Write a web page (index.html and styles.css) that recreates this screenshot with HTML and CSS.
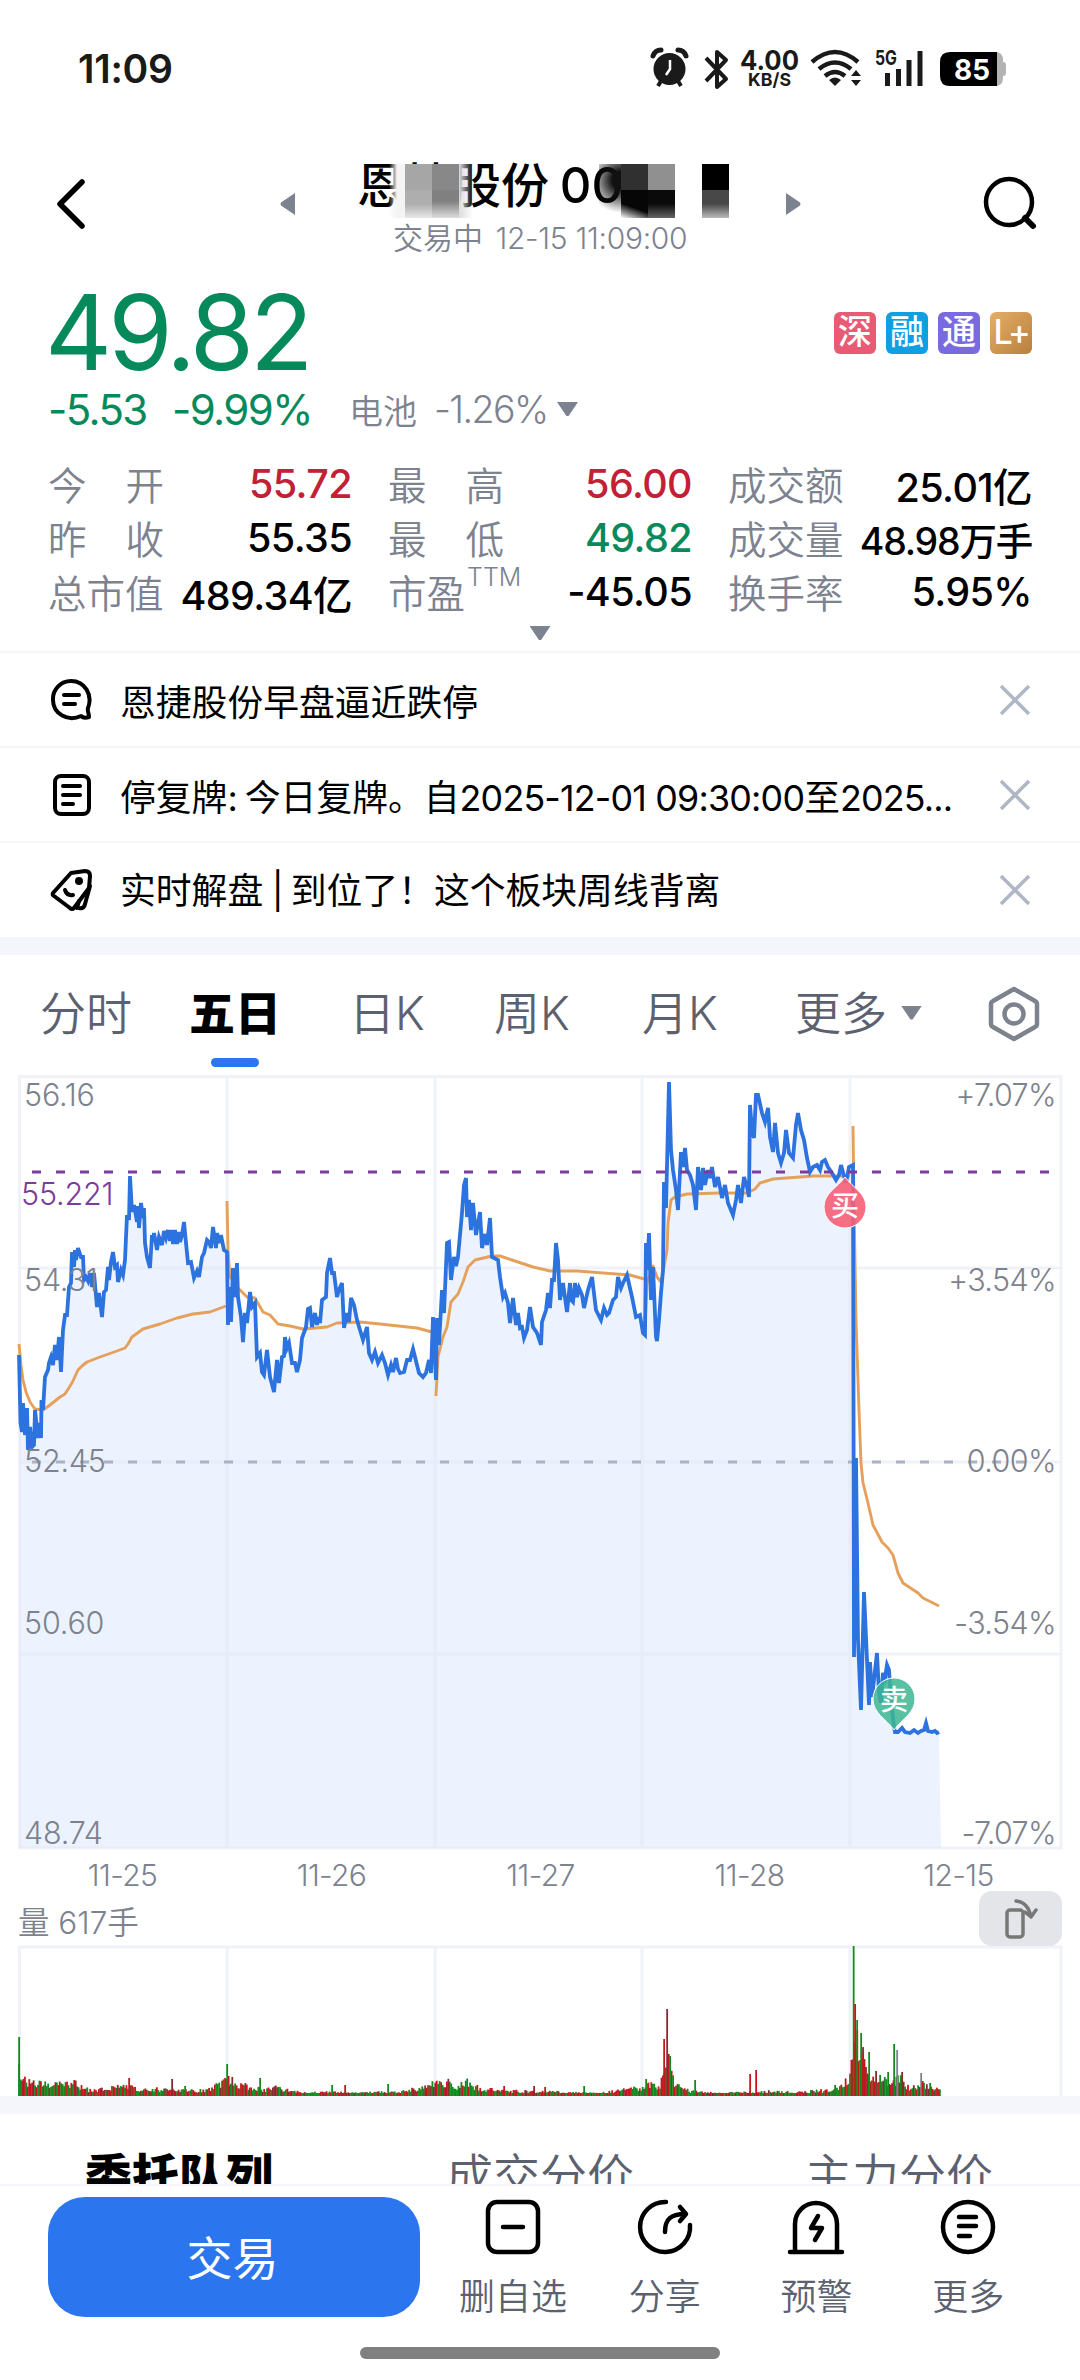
FILE: index.html
```
<!DOCTYPE html>
<html lang="zh-CN">
<head>
  <meta charset="UTF-8">
  <title>恩捷股份</title>
  <link rel="stylesheet" href="styles.css">
</head>
<body>
  <div class="status-bar">
    <span class="clock">11:09</span>
    <svg class="status-icons" width="370" height="50" viewBox="645 45 370 50">
      <!-- alarm -->
      <circle cx="669.500" cy="70" r="16" fill="#1a1a1a"/>
      <path d="M653 57q2-6 8-6M686 57q-2-6-8-6" stroke="#1a1a1a" stroke-width="5" fill="none" stroke-linecap="round"/>
      <path d="M661 82l-3 5M678 82l3 5" stroke="#1a1a1a" stroke-width="4"/>
      <path d="M670 61v9l-4 6" stroke="#fff" stroke-width="2.500" fill="none"/>
      <!-- bluetooth -->
      <path d="M706 59l20 21-9 8v-35l9 8-20 21" stroke="#1a1a1a" stroke-width="4" fill="none" stroke-linejoin="round"/>
      <text class="net-speed" x="740" y="71" textLength="59" lengthAdjust="spacingAndGlyphs">4.00</text>
      <text class="net-unit" x="748" y="87" textLength="43" lengthAdjust="spacingAndGlyphs">KB/S</text>
      <!-- wifi -->
      <g stroke="#1a1a1a" stroke-width="4.500" fill="none">
        <path d="M812 63q23-20 46 0"/>
        <path d="M819 70q16-13 32 0"/>
        <path d="M825 77q10-8 20 0"/>
      </g>
      <path d="M829 81q6-5 12 0l-6 6z" fill="#1a1a1a"/>
      <path d="M851 77l5-6 5 6zM851 81h10l-5 6z" fill="#1a1a1a"/>
      <text class="net-type" x="875" y="66" textLength="22" lengthAdjust="spacingAndGlyphs">5G</text>
      <path d="M887.500 74v13M898.500 70v17M909 61v26M920 52v35" stroke="#1a1a1a" stroke-width="5"/>
      <!-- battery -->
      <path d="M995 53q8 0 8 8v2q3 0 3 3v8q0 3-3 3v2q0 8-8 8z" fill="#b3b3b3"/>
      <path d="M950 53h47v34h-47q-10 0-10-10v-14q0-10 10-10z" fill="#000"/>
      <text class="battery" x="954" y="81" textLength="36" lengthAdjust="spacingAndGlyphs">85</text>
    </svg>
  </div>

  <div class="header">
    <svg class="back" width="30" height="54" viewBox="0 0 30 54"><path d="M26 5L4 27l22 22" fill="none" stroke="#000" stroke-width="5.500" stroke-linecap="round" stroke-linejoin="round"/></svg>
    <svg class="arrow" width="15" height="22" viewBox="0 0 15 22"><path d="M15 0v22L1 12.500q-1-1.500 0-3z" fill="#7d828f"/></svg>
    <div class="title">
      <div class="name">恩捷股份 <span>00</span></div>
      <div class="time">交易中 <span>12-15 11:09:00</span></div>
      <div class="mask mask-name"><i></i><i></i><i></i><i></i></div>
      <div class="mask mask-code"><i></i><i></i><i></i><i></i></div>
      <div class="mask mask-end"><i></i><i></i></div>
    </div>
    <svg class="arrow" width="15" height="22" viewBox="0 0 15 22"><path d="M0 0v22l14-9.500q1-1.500 0-3z" fill="#7d828f"/></svg>
    <svg class="search" width="56" height="56" viewBox="0 0 56 56"><circle cx="26" cy="26" r="23" fill="none" stroke="#000" stroke-width="4.500"/><path d="M42 42l8 8" stroke="#000" stroke-width="6" stroke-linecap="round"/></svg>
  </div>

  <div class="quote">
    <div class="price-row">
      <div class="price">49.82</div>
      <div class="badges">
        <span class="badge red">深</span>
        <span class="badge blue">融</span>
        <span class="badge purple">通</span>
        <span class="badge gold">L+</span>
      </div>
    </div>
    <div class="change-row">
      <span class="change">-5.53</span>
      <span class="percent">-9.99%</span>
      <span class="sector">电池</span>
      <span class="sector-percent">-1.26%</span>
      <i class="triangle"></i>
    </div>
    <div class="stats">
      <div class="stat"><label><b>今</b><b>开</b></label><span class="up">55.72</span></div>
      <div class="stat"><label><b>最</b><b>高</b></label><span class="up">56.00</span></div>
      <div class="stat"><label>成交额</label><span>25.01亿</span></div>
      <div class="stat"><label><b>昨</b><b>收</b></label><span>55.35</span></div>
      <div class="stat"><label><b>最</b><b>低</b></label><span class="down">49.82</span></div>
      <div class="stat"><label>成交量</label><span class="long">48.98万手</span></div>
      <div class="stat"><label>总市值</label><span>489.34亿</span></div>
      <div class="stat"><label class="ttm">市盈<sup>TTM</sup></label><span>-45.05</span></div>
      <div class="stat"><label>换手率</label><span>5.95%</span></div>
    </div>
    <div class="expand"><i class="triangle"></i></div>
  </div>

  <div class="news">
    <div class="news-item">
      <svg width="44" height="44" viewBox="0 0 44 44" fill="none" stroke="#000" stroke-width="4" stroke-linecap="round" stroke-linejoin="round"><path d="M39 39c-3 1-6 1-8-1-13 6-28-2-28-16A18 18 0 0 1 21 3c14 0 22 14 17 27-1 3 1 5 1 9z"/><path d="M14 17h15M14 26h11"/></svg>
      <p>恩捷股份早盘逼近跌停</p>
      <svg class="close" width="32" height="32" viewBox="0 0 32 32"><path d="M2 2l28 28M30 2L2 30"/></svg>
    </div>
    <div class="news-item">
      <svg width="44" height="44" viewBox="0 0 44 44" fill="none" stroke="#000" stroke-width="4" stroke-linecap="round"><rect x="5" y="3" width="34" height="38" rx="6"/><path d="M13 13h17M13 22h17M13 31h10"/></svg>
      <p>停复牌<em>: </em>今日复牌。自<span>2025-12-01 09:30:00</span>至<span>2025...</span></p>
      <svg class="close" width="32" height="32" viewBox="0 0 32 32"><path d="M2 2l28 28M30 2L2 30"/></svg>
    </div>
    <div class="news-item">
      <svg width="44" height="44" viewBox="0 0 44 44" fill="none" stroke="#000" stroke-width="4" stroke-linecap="round" stroke-linejoin="round"><path d="M3 25L21 5l14-2q5 0 5 5l-1 12-15 20q-2 2-4 0L4 28q-2-1-1-3z"/><path d="M40 18l-5 18q-1 5-6 4M29 33l-2 7"/><circle cx="29" cy="13" r="2"/><path d="M15 22q2 6 8 5"/></svg>
      <p>实时解盘<em> | </em>到位了！这个板块周线背离</p>
      <svg class="close" width="32" height="32" viewBox="0 0 32 32"><path d="M2 2l28 28M30 2L2 30"/></svg>
    </div>
  </div>

  <div class="tabs">
    <span>分时</span>
    <span class="active">五日</span>
    <span>日K</span>
    <span>周K</span>
    <span>月K</span>
    <span class="more">更多<i class="triangle"></i></span>
    <svg width="52" height="56" viewBox="0 0 52 56" fill="none" stroke="#7d828f" stroke-width="4.500" stroke-linejoin="round"><path d="M26 3l21 12q2 1 2 3v20q0 2-2 3L26 53 5 41q-2-1-2-3V18q0-2 2-3z"/><circle cx="26" cy="28" r="9.500"/></svg>
  </div>

  <svg class="chart" width="1080" height="780" viewBox="0 1070 1080 780">
    <polygon id="area" class="area"/>
    <path class="grid" d="M19.500 1076.500H1061V1848H19.500zM227 1076v772M435 1076v772M642 1076v772M850 1076v772M19 1268h1042M19 1462h1042M19 1654h1042"/>
    <path class="zero-line" d="M32 1462H1032"/>
    <g id="average" class="average"></g>
    <polyline id="price" class="price-line"/>
    <path class="cost-line" d="M32 1172H1050"/>
    <g class="axis">
      <text x="24" y="1106">56.16</text>
      <text x="24" y="1291">54.31</text>
      <text x="24" y="1472">52.45</text>
      <text x="24" y="1634">50.60</text>
      <text x="24" y="1844">48.74</text>
      <text class="cost" x="21" y="1205">55.221</text>
    </g>
    <g class="axis right">
      <text x="1056" y="1106">+7.07%</text>
      <text x="1056" y="1291">+3.54%</text>
      <text x="1056" y="1472">0.00%</text>
      <text x="1056" y="1634">-3.54%</text>
      <text x="1056" y="1844">-7.07%</text>
    </g>
    <path class="buy" d="M845 1177C853 1188 866 1193 866 1207A21 21 0 0 1 824 1207C824 1193 837 1188 845 1177z"/>
    <text class="marker" x="845" y="1216">买</text>
    <path class="sell" d="M894 1730C886 1719 873 1713 873 1699A21 21 0 0 1 915 1699C915 1713 902 1719 894 1730z"/>
    <text class="marker" x="894" y="1710">卖</text>
  </svg>

  <div class="dates">
    <span>11-25</span><span>11-26</span><span>11-27</span><span>11-28</span><span>12-15</span>
  </div>

  <div class="volume-head">
    <span>量 617手</span>
    <div class="rotate">
      <svg width="36" height="42" viewBox="0 0 36 42" fill="none" stroke="#777" stroke-width="3.500" stroke-linecap="round" stroke-linejoin="round"><rect x="4" y="12" width="16" height="27" rx="3"/><path d="M13 3q12 1 15 16M22 14l6 5 5-7"/></svg>
    </div>
  </div>

  <svg class="volume" width="1080" height="151" viewBox="0 1945 1080 151">
    <path class="grid" d="M19.500 2096V1947H1061V2096M227 1947v149M435 1947v149M642 1947v149M850 1947v149"/>
    <g id="bars"></g>
  </svg>

  <div class="sub-tabs">
    <span class="active">委托队列</span>
    <span>成交分价</span>
    <span>主力分价</span>
  </div>

  <div class="bottom-bar">
    <button>交易</button>
    <div class="actions">
      <div class="action">
        <svg width="58" height="58" viewBox="0 0 58 58"><rect x="4" y="4" width="50" height="50" rx="9"/><path d="M19 29h20"/></svg>
        <span>删自选</span>
      </div>
      <div class="action">
        <svg width="58" height="58" viewBox="0 0 58 58"><path d="M30 4A25 25 0 1 0 54 27M29 34C29 21 35 16 49 16M44 9l6 7-6 7"/></svg>
        <span>分享</span>
      </div>
      <div class="action">
        <svg width="58" height="58" viewBox="0 0 58 58"><path d="M8 53V26a21 21 0 0 1 42 0V53M3 54h52M31 18l-7 12h11l-7 12"/></svg>
        <span>预警</span>
      </div>
      <div class="action">
        <svg width="58" height="58" viewBox="0 0 58 58"><circle cx="29" cy="29" r="25"/><path d="M20 19h17M20 28h17M20 38h11"/></svg>
        <span>更多</span>
      </div>
    </div>
  </div>
  <div class="home-bar"></div>

  <script src="chart.js"></script>
</body>
</html>
```
FILE: styles.css
```
* {
  box-sizing: border-box;
}

body {
  margin: 0;
  width: 1080px;
  height: 2380px;
  overflow: hidden;
  background-color: #fff;
  color: #000;
  font-family: Inter, "Noto Sans CJK SC", sans-serif;
}

svg {
  display: block;
  flex-shrink: 0;
}

i, b, em {
  font-style: normal;
  font-weight: inherit;
}

.status-bar {
  display: flex;
  justify-content: space-between;
  align-items: center;
  height: 138px;
  padding: 0 65px 0 78px;
}

.clock {
  margin-top: -2px;
  font-size: 39px;
  font-weight: 600;
  letter-spacing: -0.3px;
  color: #1a1a1a;
}

.net-speed {
  font: 700 27px Inter, sans-serif;
  fill: #1a1a1a;
}

.net-unit {
  font: 700 18px Inter, sans-serif;
  fill: #1a1a1a;
}

.net-type {
  font: 700 20px Inter, sans-serif;
  fill: #1a1a1a;
}

.battery {
  font: 700 29px Inter, sans-serif;
  fill: #fff;
}

/* header */
.header {
  display: flex;
  align-items: center;
  height: 132px;
  padding: 0 41px 0 56px;
}

.header .arrow {
  margin-left: 194px;
}

.title {
  position: relative;
  width: 387px;
  margin-left: 62px;
  height: 132px;
  padding-top: 16px;
}

.title + .arrow {
  margin-left: 42px;
}

.search {
  margin-left: auto;
}

.name {
  font-size: 48px;
  line-height: 64px;
  font-weight: 500;
  white-space: pre;
}

.name span {
  margin-left: -2px;
  font-weight: 450;
  font-size: 49px;
}

.time {
  margin: 3px 0 0 36px;
  font-size: 30px;
  line-height: 34px;
  color: #7d828f;
  font-weight: 350;
  white-space: nowrap;
}

.time span {
  margin-left: 4px;
  letter-spacing: -0.3px;
}

/* mosaic over the name and code */
.mask {
  position: absolute;
  top: 26px;
  display: grid;
  grid-template-columns: 27px 27px;
  grid-template-rows: 26px 28px;
}

.mask-name {
  left: 48px;
}

.mask-name::before {
  content: "";
  position: absolute;
  left: -16px;
  width: 16px;
  height: 54px;
  background: linear-gradient(90deg, rgba(244, 244, 244, 0), #f4f4f4 50%);
}

.mask-name::after {
  content: "";
  position: absolute;
  left: 54px;
  width: 14px;
  height: 54px;
  background: linear-gradient(90deg, #ddd, rgba(255, 255, 255, 0));
}

.mask-name i:nth-child(1) { background-color: #a6a6a6; }
.mask-name i:nth-child(2) { background-color: #888; }
.mask-name i:nth-child(3) { background: linear-gradient(#aeaeae 50%, #e8e8e8); }
.mask-name i:nth-child(4) { background: linear-gradient(#808080 40%, #ddd); }

.mask-code {
  left: 264px;
}

.mask-code::before {
  content: "";
  position: absolute;
  left: -22px;
  width: 22px;
  height: 54px;
  background: radial-gradient(circle at 100% 30%, #111 20%, rgba(60, 60, 60, 0) 75%);
}

.mask-code i:nth-child(1) { background-color: #303030; }
.mask-code i:nth-child(2) { background-color: #909090; }
.mask-code i:nth-child(3) { background: linear-gradient(200deg, #060606 60%, #fff); }
.mask-code i:nth-child(4) { background: linear-gradient(#0a0a0a 50%, #666); }

.mask-end {
  left: 345px;
  grid-template-columns: 27px;
}

.mask-end i:nth-child(1) { background-color: #000; }
.mask-end i:nth-child(2) { background: linear-gradient(#484848 50%, #bbb); }

/* quote */
.quote {
  height: 383px;
  padding: 0 48px;
  border-bottom: 2px solid #f4f5f8;
}

.price-row {
  display: flex;
  justify-content: space-between;
  align-items: center;
  height: 124px;
}

.price {
  margin-left: -3px;
  font-size: 104px;
  line-height: 124px;
  letter-spacing: -4px;
  color: #078a5b;
}

.badges {
  display: flex;
  gap: 10px;
  margin-top: 2px;
}

.badge {
  width: 42px;
  height: 42px;
  border-radius: 6px;
  font-size: 34px;
  font-weight: 500;
  line-height: 40px;
  text-align: center;
  color: #fff;
}

.red { background-color: #e95b74; }
.blue { background-color: #109fe2; }
.purple { background-color: #7a6adf; }

.gold {
  background: linear-gradient(135deg, #e5ae67, #b7813e);
  font-weight: 450;
  font-size: 34px;
  letter-spacing: -2px;
}

.change-row {
  display: flex;
  align-items: center;
  height: 32px;
  margin-top: -1px;
  font-size: 42px;
  letter-spacing: -1.6px;
  color: #7d828f;
}

.change {
  width: 124px;
  color: #078a5b;
}

.percent {
  width: 177px;
  color: #078a5b;
}

.sector {
  width: 85px;
  font-size: 34px;
  font-weight: 350;
  letter-spacing: 0;
}

.sector-percent {
  width: 123px;
  font-size: 37.5px;
  font-weight: 350;
}

.triangle {
  width: 21px;
  height: 14px;
  background-color: #7d828f;
  clip-path: polygon(0 0, 100% 0, 55% 100%, 45% 100%);
}

.stats {
  display: grid;
  grid-template-columns: 304px 304px 304px;
  grid-auto-rows: 54px;
  column-gap: 36px;
  margin-top: 32px;
}

.stat {
  display: flex;
  justify-content: space-between;
  align-items: center;
  white-space: nowrap;
}

.stat label {
  display: flex;
  justify-content: space-between;
  width: 116px;
  margin-top: -2px;
  font-size: 38.5px;
  font-weight: 350;
  color: #7d828f;
}

.stat .ttm {
  justify-content: flex-start;
}

.stat sup {
  margin: 2px 0 0 2px;
  font-size: 25px;
  line-height: 25px;
}

.stat span {
  font-size: 39.5px;
  font-weight: 450;
  letter-spacing: -0.6px;
}

.stat .long {
  font-size: 37.5px;
  letter-spacing: -1.2px;
}

.stat .up { color: #c32036; }
.stat .down { color: #078a5b; }

.expand {
  display: flex;
  justify-content: center;
  margin-top: 7px;
}

/* news */
.news-item {
  display: flex;
  align-items: center;
  height: 95px;
  padding: 0 49px 0 50px;
  border-bottom: 2px solid #f4f5f8;
}

.news-item p {
  flex: 1;
  margin: 0 0 0 26px;
  font-size: 35.8px;
  white-space: nowrap;
}

.news-item p span {
  letter-spacing: -0.8px;
}

.news-item em {
  letter-spacing: -1.5px;
}

.news-item:last-child {
  height: 94px;
  border-bottom: none;
}

.news-item:last-child p {
  margin-top: -4px;
}

.close path {
  stroke: #b0b7c4;
  stroke-width: 3.5;
}

/* period tabs */
.tabs {
  display: grid;
  grid-template-columns: 149px 160px 145px 148px 153px 193px 52px;
  align-items: center;
  height: 133px;
  padding: 0 0 0 40px;
  border-top: 18px solid #f4f6fb;
  font-size: 46px;
  font-weight: 350;
  line-height: 60px;
  color: #5c6170;
}

.tabs svg {
  margin-top: 3px;
}

.tabs .active {
  position: relative;
  font-weight: 900;
  color: #000;
}

.tabs .active::after {
  content: "";
  position: absolute;
  left: 22px;
  bottom: -24px;
  width: 48px;
  height: 9px;
  border-radius: 5px;
  background-color: #2b75ee;
}

.more {
  display: flex;
  align-items: center;
  gap: 14px;
}

/* charts */
.grid {
  fill: none;
  stroke: #e1e6f2;
  stroke-opacity: 0.5;
  stroke-width: 3;
}

.area {
  fill: #ecf3fe;
}

.price-line {
  fill: none;
  stroke: #2d73e0;
  stroke-width: 3.8;
}

.average {
  fill: none;
  stroke: #e5a15c;
  stroke-width: 2.9;
  stroke-linejoin: round;
}

.cost-line {
  stroke: #7b3c9c;
  stroke-width: 3;
  stroke-dasharray: 9 15;
}

.zero-line {
  stroke: #acb2c5;
  stroke-width: 3;
  stroke-dasharray: 9 15;
}

.axis {
  font-size: 30.5px;
  font-weight: 350;
  letter-spacing: -0.2px;
  fill: #7d828f;
}

.right {
  letter-spacing: -0.6px;
  text-anchor: end;
}

.cost {
  fill: #7b3c9c;
}

.buy {
  fill: #f75f77;
  fill-opacity: 0.9;
  stroke: #fff;
}

.sell {
  fill: #3cb690;
  fill-opacity: 0.85;
  stroke: #fff;
}

.marker {
  font-size: 28px;
  font-weight: 500;
  text-anchor: middle;
  fill: #fff;
}

.dates {
  display: grid;
  grid-template-columns: repeat(5, 209px);
  height: 41px;
  padding-left: 18px;
  font-size: 30px;
  line-height: 51px;
  font-weight: 350;
  letter-spacing: -0.6px;
  text-align: center;
  color: #7d828f;
}

.volume-head {
  display: flex;
  justify-content: space-between;
  height: 54px;
  padding: 0 18px;
  font-size: 31.5px;
  line-height: 64px;
  font-weight: 350;
  color: #7d828f;
}

.rotate {
  display: flex;
  justify-content: center;
  align-items: center;
  width: 83px;
  height: 55px;
  border-radius: 13px;
  background-color: #e4e5e9;
}

.green { fill: #15891e; }
.bar-red { fill: #c5161f; }
.dark { fill: #862a32; }
.gray { fill: #7d828f; }

/* bottom */
.sub-tabs {
  display: grid;
  grid-template-columns: 361px 359px auto;
  height: 88px;
  padding: 31px 0 0 85px;
  overflow: hidden;
  border-top: 18px solid #f4f6fb;
  font-size: 47px;
  font-weight: 350;
  line-height: 62px;
  color: #5c6170;
}

.sub-tabs .active {
  font-weight: 900;
  color: #000;
}

.bottom-bar {
  position: relative;
  display: flex;
  height: 163px;
  padding: 11px 0 0 48px;
  border-top: 2px solid #f4f5f8;
  background-color: #fff;
}

.bottom-bar button {
  width: 372px;
  height: 120px;
  padding: 0 3px 4px 0;
  border: none;
  border-radius: 37px;
  background-color: #2b75ee;
  color: #fff;
  font-family: inherit;
  font-size: 46px;
}

.actions {
  display: grid;
  grid-template-columns: repeat(4, 151.8px);
  margin: 1px 0 0 17px;
}

.action {
  display: flex;
  flex-direction: column;
  align-items: center;
  font-size: 36px;
  font-weight: 350;
  color: #5c6170;
}

.action svg {
  fill: none;
  stroke: #000;
  stroke-width: 4.5;
  stroke-linecap: round;
  stroke-linejoin: round;
}

.action span {
  margin-top: 16px;
  line-height: 50px;
}

.home-bar {
  width: 360px;
  height: 12px;
  margin: 0 auto;
  border-radius: 6px;
  background-color: #808080;
}
```
FILE: chart.js
```
const BOTTOM = 1848;

const price = `
19,1355 20.5,1423 22,1432 23,1403 25,1435 27,1408 28,1450 30,1427 32,1447 34,1445 35,1410 38,1438 39,1423 41,1438
41.5,1400 43,1410 45,1377 48,1370 49,1363 51,1357 53,1365 55,1345 57,1360 59,1337 61,1372 63,1330 65,1315 67,1315 69,1287
71,1283 72,1252 74,1267 75,1250 76,1260 78,1248 81,1257 83,1257 84,1280 86,1277 88,1281 90,1273 92,1287 94,1273 97,1307 99,1293
102,1317 104,1292 106,1290 108,1267 109,1280 111,1262 113,1252 115,1267 117,1265 118,1282 121,1270 123,1275 125,1260
127,1215 129,1220 130,1176 132,1212 134,1205 137,1222 138,1206 139,1228 141,1203 143,1218 144,1208 145,1243 147,1257
150,1268 152,1235 153,1242 154,1233 157,1250 159,1237 162,1245 164,1231 166,1238 168,1230 170,1241 172,1230 173,1244 175,1230 177,1244 179,1232 180,1242
182,1235 184,1222 186,1243 188,1263 191,1262 194,1278 197,1271 199,1277 202,1257 204,1253 207,1240 209,1242 211,1248 213,1227
216,1248 217,1233 219,1243 221,1235 224,1250 227,1252 228,1325 229,1287 231,1322 233,1268 235,1297 237,1263 238,1297
241,1317 243,1342 245,1313 247,1323 250,1292 252,1307 255,1303 257,1357 260,1353 262,1372 264,1375 267,1350 270,1377
274,1392 277,1360 279,1383 282,1357 284,1356 285,1337 287,1348 289,1343 292,1363 295,1363 297,1372 300,1360 302,1338
306,1327 308,1309 310,1308 312,1327 315,1313 317,1325 318,1317 320,1323 322,1300 326,1297 327,1273 330,1258 332,1273
334,1273 337,1297 339,1290 342,1283 344,1328 347,1313 349,1322 351,1298 354,1305 357,1320 360,1330 363,1340 367,1327
369,1353 372,1360 375,1352 378,1363 382,1355 385,1363 388,1375 391,1365 393,1372 396,1358 398,1369 400,1373 404,1372 407,1360 410,1360
413,1349 417,1365 419,1373 423,1377 426,1373 429,1360 431,1373 433,1317 436,1380 437,1318 439,1345 442,1290 444,1313
447,1243 449,1242 451,1280 454,1257 456,1266 458,1257 462,1213 464,1185 466,1178 467,1217 469,1200 471,1230 473,1203
476,1235 480,1212 482,1248 485,1234 487,1245 490,1218 492,1257 498,1260 500,1277 503,1297 505,1293 508,1303 510,1323 513,1298
516,1325 518,1313 520,1328 522,1327 524,1338 527,1330 530,1307 533,1327 537,1333 541,1345 542,1322 546,1310 548,1293 550,1308
552,1280 554,1280 556,1243 558,1260 560,1300 563,1283 567,1312 570,1283 571,1300 573,1302 575,1283 577,1297 579,1288 582,1295
584,1308 588,1290 592,1277 596,1310 601,1320 604,1308 607,1315 609,1313 613,1300 616,1297 618,1277 621,1288 623,1283
627,1275 632,1297 636,1317 640,1315 643,1333 645,1335 646,1243 647,1270 649,1233 651,1300 653,1267 656,1337 657,1341
659,1320 661,1293 663,1270 664,1182 666,1208 669,1082 671,1150 673,1170 676,1190 678,1210 681,1152 683,1167 685,1148
687,1170 690,1175 693,1185 696,1210 698,1167 701,1190 703,1168 705,1185 708,1170 710,1178 712,1167 715,1187 718,1177 722,1198 725,1185
728,1203 733,1215 736,1200 738,1185 741,1203 744,1177 747,1187 749,1197 750,1105 752,1130 754,1138 756,1095 758,1095
762,1113 765,1122 768,1108 770,1137 773,1152 775,1123 778,1153 781,1163 784,1153 786,1130 789,1153 793,1158 796,1125
798,1113 801,1130 804,1140 807,1158 810,1172 813,1167 817,1165 820,1170 822,1162 825,1160 828,1167 832,1173 836,1180 839,1175
841,1165 844,1176 846,1183 849,1167 853,1165 853.5,1400 854,1657 856,1458 858,1640 861,1710 864,1592 867,1660 869,1705 870,1662
872,1697 877,1653 879,1693 881,1703 883,1673 885,1678 887,1665 889,1670 891,1700 894,1727 895,1732 898,1732 902,1728 905,1732 910,1733
914,1730 918,1733 921,1731 924,1730 926,1723 928,1731 932,1732 935,1731 937,1733 939,1732`.trim();

// one line per trading day
const average = [
  '19,1344 21,1365 23,1380 26,1392 30,1402 35,1409 43,1410 50,1405 60,1397 65,1394 72,1383 78,1370 82,1366 87,1362 100,1357 117,1351 125,1348 128,1344 132,1337 143,1329 160,1324 177,1318 193,1314 210,1312 226,1306',
  '227,1201 228,1250 230,1277 238,1288 247,1297 255,1298 263,1312 270,1315 278,1324 290,1326 303,1329 327,1327 337,1323 360,1322 380,1324 417,1328 432,1332',
  '436,1396 438,1357 443,1337 447,1327 451,1302 458,1294 463,1282 468,1267 475,1260 492,1256 500,1256 512,1260 533,1267 550,1271 577,1271 630,1275 644,1279',
  '645,1327 647,1283 653,1266 657,1277 661,1282 664,1267 667,1250 668,1223 671,1200 675,1197 687,1194 720,1193 747,1193 755,1189 760,1183 773,1179 800,1177 813,1176 850,1176',
  '853,1126 854,1203 856,1320 859,1410 861,1463 863,1483 868,1503 873,1525 882,1542 888,1548 893,1555 898,1573 903,1583 918,1593 923,1598 939,1606'
];

document.getElementById('price').setAttribute('points', price);
document.getElementById('area').setAttribute('points', `19,${BOTTOM} ${price} 941,${BOTTOM}`);
document.getElementById('average').innerHTML =
  average.map(points => `<polyline points="${points}"/>`).join('');

// volume: [x, height] level of the small bars
const levels = [
  [19, 28], [22, 20], [30, 14], [55, 12], [75, 14], [90, 6], [110, 8], [125, 11], [135, 8], [165, 7],
  [180, 6], [205, 6], [220, 13], [229, 18], [240, 12], [265, 7], [275, 9], [300, 4], [400, 4], [430, 12],
  [447, 16], [455, 9], [463, 17], [480, 8], [500, 6], [600, 3], [640, 9], [650, 12], [660, 8], [664, 30],
  [669, 38], [675, 12], [690, 5], [720, 3], [765, 5], [800, 4], [835, 7], [849, 18], [854, 75], [858, 58],
  [864, 38], [870, 24], [880, 19], [890, 17], [900, 18], [910, 9], [921, 12], [939, 7]
];

const peaks = [
  [19, 59, 'green'], [129, 18, 'bar-red'], [172, 17, 'dark'], [185, 10, 'green'], [227, 32, 'green'],
  [228.5, 20, 'bar-red'], [260, 18, 'green'], [332, 11, 'green'], [345, 11, 'bar-red'], [388, 12, 'green'],
  [504, 10, 'bar-red'], [534, 10, 'dark'], [545, 9, 'bar-red'], [584, 10, 'green'], [646, 17, 'green'],
  [664, 57, 'bar-red'], [667, 87, 'dark'], [670, 40, 'green'], [695, 16, 'green'], [750, 22, 'bar-red'],
  [756, 26, 'bar-red'], [835, 11, 'green'], [853.5, 150, 'green'], [855, 92, 'bar-red'], [857, 76, 'green'],
  [861, 63, 'green'], [863, 42, 'bar-red'], [869, 44, 'green'], [880, 21, 'green'], [888, 24, 'green'],
  [894, 52, 'green'], [897, 46, 'gray'], [902, 24, 'dark'], [921, 23, 'gray'], [922.5, 15, 'bar-red'], [930, 13, 'green']
];

let seed = 7;
function random() {
  seed = (seed * 16807) % 2147483647;
  return seed / 2147483647;
}

function levelAt(x) {
  let i = 1;
  while (i < levels.length - 1 && levels[i][0] < x) i++;
  const [x0, h0] = levels[i - 1];
  const [x1, h1] = levels[i];
  return h0 + (h1 - h0) * (x - x0) / (x1 - x0);
}

function bar(x, h, color) {
  return `<rect class="${color}" x="${x - 0.75}" y="${2096 - h}" width="1.8" height="${h}"/>`;
}

let bars = '';
for (let x = 19; x < 940; x += 1.45) {
  const color = random() < 0.48 ? 'green' : random() < 0.75 ? 'bar-red' : 'dark';
  bars += bar(x, Math.max(3, levelAt(x) * (0.55 + random() * 0.65)), color);
}
for (const [x, h, color] of peaks) {
  bars += bar(x, h, color);
}
document.getElementById('bars').innerHTML = bars;
```
